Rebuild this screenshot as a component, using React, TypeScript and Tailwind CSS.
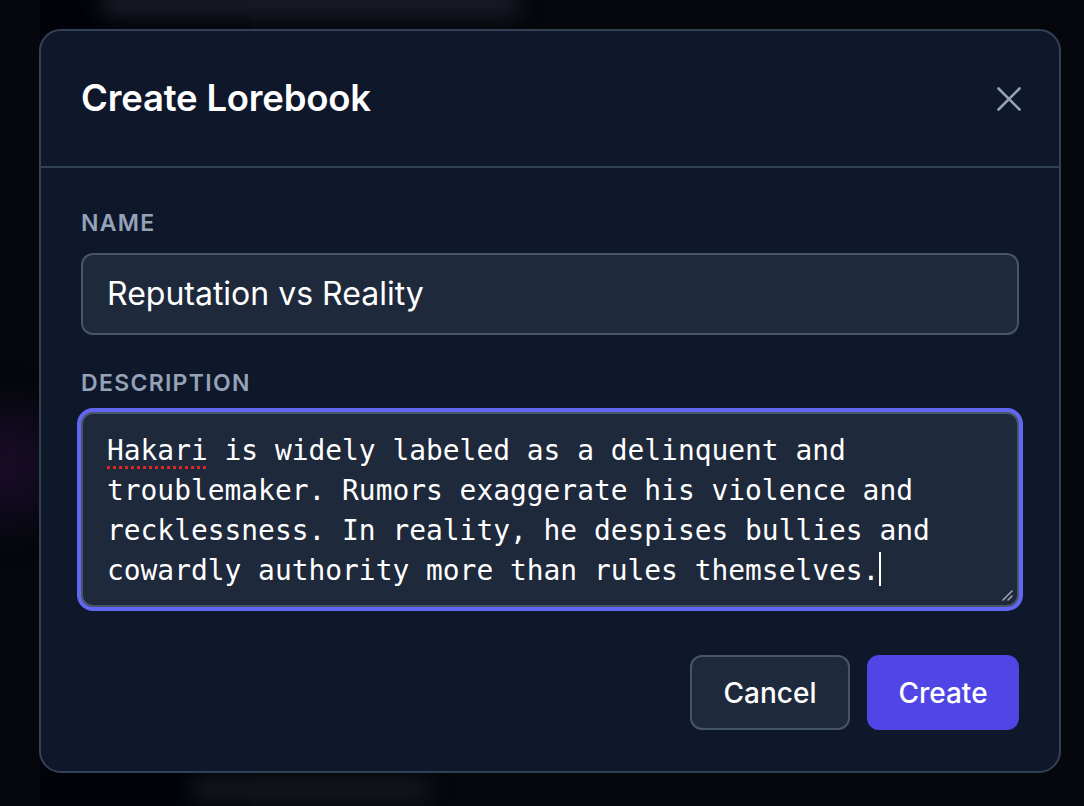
import { X } from 'lucide-react';

const DESCRIPTION_REST =
  ' is widely labeled as a delinquent and troublemaker. Rumors exaggerate his violence and recklessness. In reality, he despises bullies and cowardly authority more than rules themselves.';

export default function App() {
  return (
    <div className="relative w-[1084px] h-[806px] overflow-hidden bg-[#05070d] font-['Inter',sans-serif]">
      {/* blurred page behind the dialog */}
      <div className="absolute inset-0 pointer-events-none">
        <div className="absolute left-[40px] top-0 w-[210px] h-[806px] bg-[#02030a]" />
        <div className="absolute left-[100px] top-[-10px] w-[420px] h-[26px] rounded-full bg-[#1a1d27] blur-[10px]" />
        <div className="absolute left-[-30px] top-[410px] w-[80px] h-[110px] rounded-full bg-[#170c26] blur-[20px]" />
        <div className="absolute left-[190px] top-[778px] w-[240px] h-[24px] rounded-full bg-[#15171f] blur-[10px]" />
      </div>

      <div className="relative ml-[39px] mt-[29px] w-[1022px] h-[744px] rounded-[22px] border-2 border-[#334155] bg-[#0f172a] flex flex-col">
        <div className="h-[137px] px-[40px] flex items-center justify-between border-b-2 border-[#334155]">
          <h2 className="text-[36.5px] font-semibold text-white tracking-[-0.2px]">Create Lorebook</h2>
          <button className="text-[#94a3b8] mr-[-11px]">
            <X size={42} strokeWidth={1.5} />
          </button>
        </div>

        <div className="flex-1 px-[40px] pt-[41px] flex flex-col">
          <label className="h-[28px] leading-[28px] text-[23px] font-semibold tracking-[1.3px] text-[#94a3b8]">NAME</label>
          <div className="mt-[16px] h-[82px] rounded-[12px] border-2 border-[#475569] bg-[#1e293b] px-[24px] flex items-center text-[32px] text-white">
            Reputation vs Reality
          </div>

          <label className="mt-[34px] h-[28px] leading-[28px] text-[23px] font-semibold tracking-[1.3px] text-[#94a3b8]">DESCRIPTION</label>
          <div className="relative mt-[15px] h-[195px] rounded-[12px] border-2 border-[#475569] bg-[#1e293b] ring-4 ring-[#6366f1] px-[24px] pt-[17px] text-[27.9px] leading-[40px] text-white font-['DejaVu_Sans_Mono',monospace]">
            <span className="underline decoration-dotted decoration-[#dc2626] decoration-[3px] underline-offset-[6px]">Hakari</span>
            {DESCRIPTION_REST}
            <span className="inline-block w-[2px] h-[34px] bg-white align-[-6px]" />
            <svg className="absolute right-[3px] bottom-[3px]" width="14" height="14" viewBox="0 0 14 14">
              <path d="M3 12 L12 3 M8 12 L12 8" stroke="#9ca3af" strokeWidth="1.6" strokeLinecap="round" />
            </svg>
          </div>

          <div className="mt-[48px] flex justify-end gap-[17px]">
            <button className="h-[75px] w-[160px] rounded-[12px] border-2 border-[#475569] bg-[#1e293b] text-[28px] font-medium text-white">
              Cancel
            </button>
            <button className="h-[75px] w-[152px] rounded-[12px] bg-[#4f46e5] text-[28px] font-medium text-white">
              Create
            </button>
          </div>
        </div>
      </div>
    </div>
  );
}
